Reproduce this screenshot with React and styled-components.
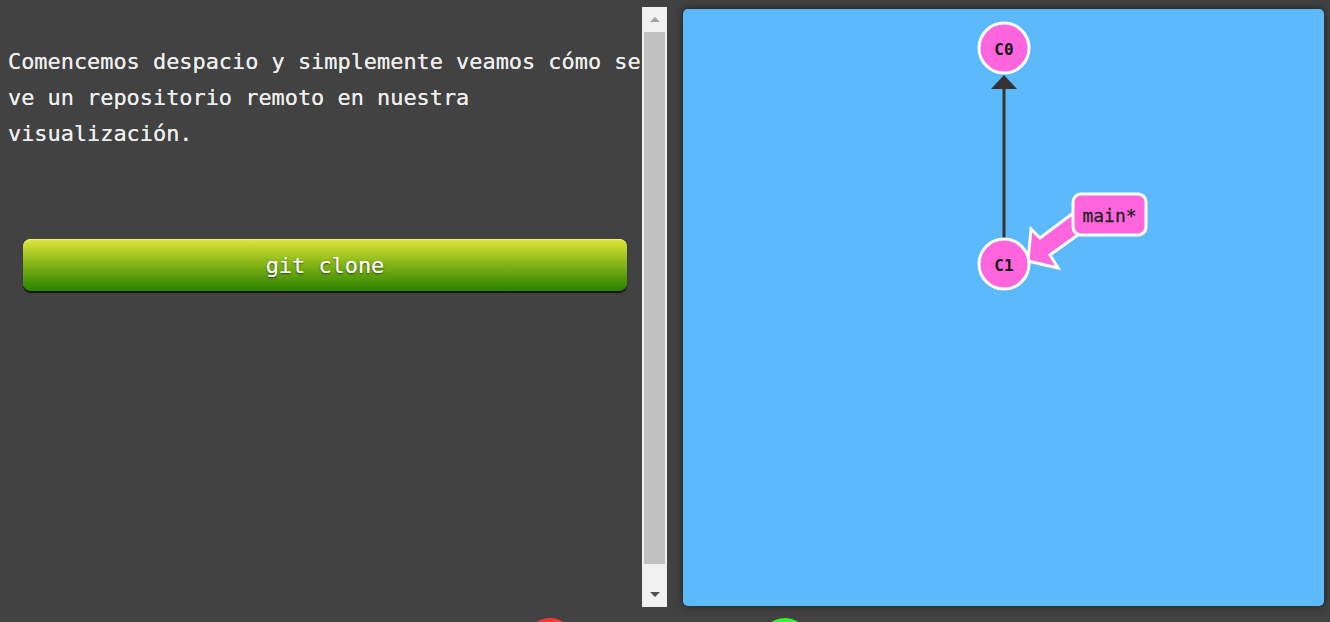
import styled, { createGlobalStyle } from 'styled-components';

const Global = createGlobalStyle`
	html, body {
		margin: 0;
		height: 100%;
		overflow: hidden;
		background: #424242;
	}
	#root {
		height: 100%;
	}
`;

const Page = styled.div`
	display: flex;
	flex-direction: column;
	height: 100%;
	font-family: "DejaVu Sans Mono", "Liberation Mono", monospace;
`;

const Main = styled.div`
	display: flex;
	align-items: flex-start;
	padding-top: 8px;
	height: 599px;
	flex-shrink: 0;
`;

const Intro = styled.div`
	width: 642px;
	height: 100%;
	box-sizing: border-box;
	padding: 36px 0 0 8px;
	overflow: hidden;
`;

const Text = styled.p`
	margin: 0;
	font-size: 21.9px;
	line-height: 36px;
	color: #eeeeee;
	white-space: pre-line;
	text-shadow: 0 0 0.6px #eeeeee;
`;

const CommandButton = styled.button`
	display: block;
	margin: 87px 0 0 15px;
	width: 604px;
	height: 52px;
	border: none;
	border-radius: 8px;
	background: linear-gradient(to bottom, #dfe83c 0%, #8ab819 45%, #2a8200 100%);
	box-shadow: 0 2px 1px #151515, inset 0 1px 0 #f0f56a;
	font-family: inherit;
	font-size: 21.9px;
	color: #ffffff;
	text-shadow: 0 1px 2px rgba(0, 0, 0, 0.6), 0 0 0.6px #fff;
	cursor: pointer;
`;

const Scrollbar = styled.div`
	width: 25px;
	height: 600px;
	margin-top: -1px;
	background: #f1f1f1;
	display: flex;
	flex-direction: column;
	align-items: center;
	flex-shrink: 0;
`;

const ScrollArrow = styled.div`
	height: ${p => (p.$down ? '26px' : '25px')};
	width: 100%;
	margin-top: ${p => (p.$down ? 'auto' : '0')};
	display: flex;
	align-items: center;
	justify-content: center;
	&::after {
		content: '';
		width: 0;
		height: 0;
		border-left: 5px solid transparent;
		border-right: 5px solid transparent;
		${p => p.$down
			? 'border-top: 5px solid #505050;'
			: 'border-bottom: 5px solid #a3a3a3;'}
	}
`;

const Thumb = styled.div`
	width: 21px;
	height: 532px;
	background: #c1c1c1;
`;

const Visual = styled.div`
	margin-left: 16px;
	margin-top: 1px;
	width: 641px;
	height: 597px;
	background: #5cbafc;
	border-radius: 5px;
	box-shadow: 0 0 8px rgba(0, 0, 0, 0.55);
	overflow: hidden;
	flex-shrink: 0;
`;

const Controls = styled.div`
	display: flex;
	padding: 11px 0 0 525px;
	gap: 185px;
`;

const Dot = styled.div`
	width: 50px;
	height: 50px;
	border-radius: 50%;
	background: ${p => p.$color};
`;

const CommitText = styled.text`
	font-family: "DejaVu Sans Mono", monospace;
	font-size: 16px;
	font-weight: 700;
	fill: #111;
`;

const BranchText = styled.text`
	font-family: "DejaVu Sans Mono", monospace;
	font-size: 18px;
	fill: #222;
	stroke: #222;
	stroke-width: 0.3px;
`;

const PINK = '#ff66dd';

const commits = [
	{ id: 'C0', x: 321, y: 39 },
	{ id: 'C1', x: 321, y: 255 },
];

function Graph() {
	return (
		<svg width="641" height="597" viewBox="0 0 641 597">
			<line x1="321" y1="79" x2="321" y2="230" stroke="#333" strokeWidth="3" />
			<polygon points="321,66 308,80 334,80" fill="#333" />
			<polygon
				points="345,252 348,220 357,229 389,205 399,223 367,246 375,259"
				fill={PINK}
				stroke="#fff"
				strokeWidth="3"
				strokeLinejoin="miter"
			/>
			<rect x="390" y="185" width="73" height="41" rx="8" fill={PINK} stroke="#fff" strokeWidth="3" />
			<BranchText x="426.5" y="206" textAnchor="middle" dominantBaseline="central">main*</BranchText>
			{commits.map(c => (
				<g key={c.id}>
					<circle cx={c.x} cy={c.y} r="25" fill={PINK} stroke="#fff" strokeWidth="3" />
					<CommitText x={c.x} y={c.y + 1} textAnchor="middle" dominantBaseline="central">{c.id}</CommitText>
				</g>
			))}
		</svg>
	);
}

export default function App() {
	return (
		<Page>
			<Global />
			<Main>
				<Intro>
					<Text>{'Comencemos despacio y simplemente veamos cómo se\nve un repositorio remoto en nuestra\nvisualización.'}</Text>
					<CommandButton>git clone</CommandButton>
				</Intro>
				<Scrollbar>
					<ScrollArrow />
					<Thumb />
					<ScrollArrow $down />
				</Scrollbar>
				<Visual>
					<Graph />
				</Visual>
			</Main>
			<Controls>
				<Dot $color="#ff3838" />
				<Dot $color="#3cef3c" />
			</Controls>
		</Page>
	);
}
